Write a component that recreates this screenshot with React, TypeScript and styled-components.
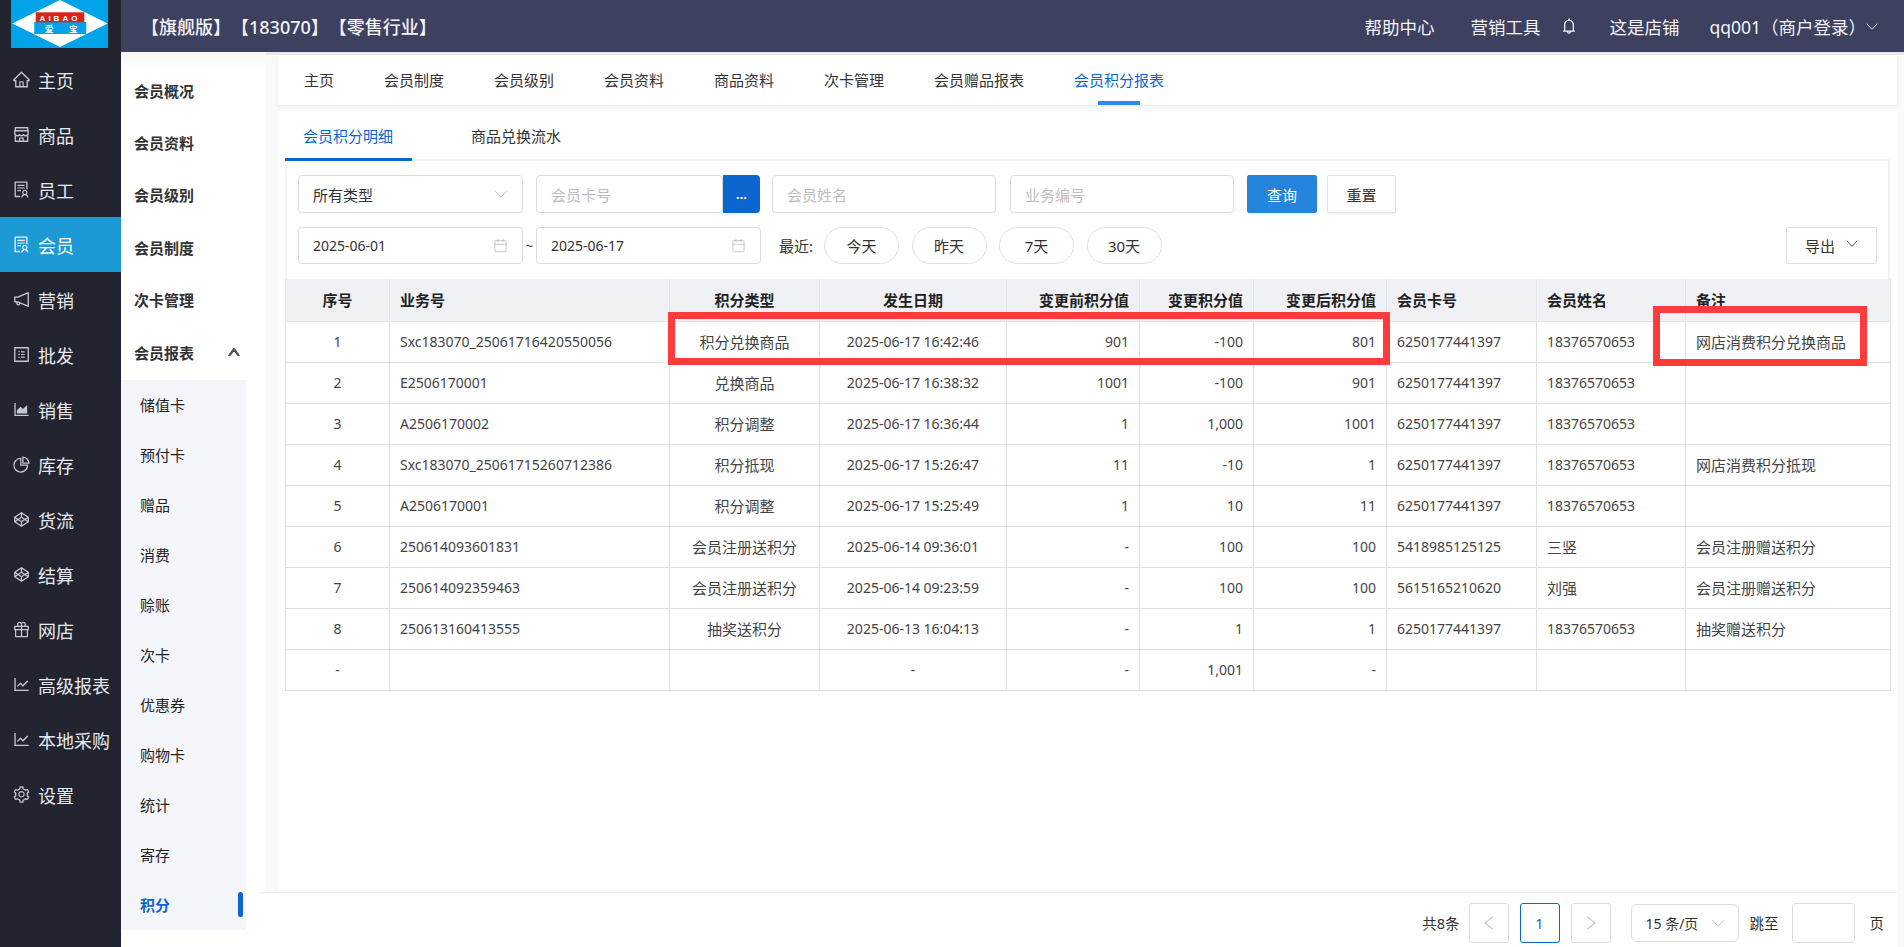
import { FC, ReactNode } from "react";
import styled, { createGlobalStyle, css } from "styled-components";
import {
  AiOutlineAreaChart,
  AiOutlineBell,
  AiOutlineCodepen,
  AiOutlineGift,
  AiOutlineHome,
  AiOutlineLineChart,
  AiOutlineNotification,
  AiOutlinePieChart,
  AiOutlineProfile,
  AiOutlineSetting,
  AiOutlineShop,
  AiOutlineSolution,
  AiOutlineUp,
} from "react-icons/ai";
import { Calendar } from "lucide-react";

const GlobalStyle = createGlobalStyle`
  html, body {
    margin: 0;
    height: 100%;
    overflow: hidden;
    background: #fff;
    font-family: "Noto Sans", "Noto Sans CJK SC", sans-serif;
    color: #333;
    text-spacing-trim: space-all;
  }
  * { box-sizing: border-box; }
`;

const Page = styled.div`
  display: flex;
  width: 1904px;
  height: 947px;
  overflow: hidden;
`;

/* left dark menu */
const Sidebar = styled.aside`
  flex: 0 0 121px;
  background: #22252f;
`;
const LogoBox = styled.div`
  height: 52px;
  padding-left: 11px;
`;
const NavItem = styled.div<{ $active?: boolean }>`
  display: flex;
  align-items: center;
  gap: 7px;
  height: 55px;
  padding-left: 12px;
  font-size: 18px;
  color: ${({ $active }) => ($active ? "#fff" : "#e6e8ef")};
  background: ${({ $active }) => ($active ? "#1d9ad6" : "transparent")};
  svg {
    flex: none;
    font-size: 19px;
    color: ${({ $active }) => ($active ? "#e6f3fb" : "#c3c6d0")};
  }
`;

const Right = styled.div`
  flex: 1;
  min-width: 0;
  display: flex;
  flex-direction: column;
`;

/* top bar */
const TopBar = styled.header`
  flex: 0 0 52px;
  display: flex;
  align-items: center;
  justify-content: space-between;
  padding: 0 26px 0 20px;
  background: #3d405e;
  color: #f2f3f7;
  font-size: 17.5px;
`;
const TopTitle = styled.div`
  font-size: 18px;
  font-weight: 500;
`;
const TopLinks = styled.div`
  display: flex;
  align-items: center;
  gap: 36px;
`;
const TopGroup = styled.div`
  display: flex;
  align-items: center;
  gap: 20px;
  margin-right: -5px;
  svg {
    font-size: 18px;
  }
`;
const UserBox = styled.div`
  display: flex;
  align-items: center;
  margin-left: -6px;
`;

const Body = styled.div`
  flex: 1;
  display: flex;
  min-height: 0;
`;

/* second menu */
const SubNav = styled.nav`
  flex: 0 0 144px;
  padding-top: 12px;
  background: linear-gradient(#f6f6f8, #fff 18px);
`;
const SubNavItem = styled.div`
  display: flex;
  align-items: center;
  justify-content: space-between;
  height: 52.4px;
  padding: 0 24px 0 13px;
  font-size: 15px;
  font-weight: 600;
  color: #333;
  svg {
    font-size: 14px;
    color: #555;
    stroke: #555;
    stroke-width: 90;
  }
`;
const SubSubList = styled.div`
  width: 125px;
  margin-top: 1.6px;
  background: #f5f6fb;
`;
const SubSubItem = styled.div<{ $active?: boolean }>`
  display: flex;
  align-items: center;
  justify-content: space-between;
  height: 50px;
  padding: 0 3px 0 19px;
  font-size: 15px;
  color: ${({ $active }) => ($active ? "#0d66d0" : "#222")};
  font-weight: ${({ $active }) => ($active ? 700 : 400)};
`;
const ActiveBar = styled.span`
  width: 5px;
  height: 25px;
  border-radius: 3px;
  background: #0d66d0;
`;

/* content */
const Content = styled.main`
  flex: 1;
  min-width: 0;
  display: flex;
  flex-direction: column;
  padding: 3px 7px 0 13px;
  background: #fafafa;
  box-shadow: inset 0 3px 0 #e9e9eb;
`;
const TopTabs = styled.div`
  flex: 0 0 50px;
  display: flex;
  align-items: center;
  gap: 50px;
  padding: 0 0 2px 26px;
  background: #fff;
  box-shadow: 0 1px 3px rgba(0, 0, 0, 0.08);
`;
const TopTab = styled.div<{ $active?: boolean }>`
  position: relative;
  font-size: 15px;
  color: ${({ $active }) => ($active ? "#0d66d0" : "#333")};
  ${({ $active }) =>
    $active &&
    css`
      &::after {
        content: "";
        position: absolute;
        left: 24px;
        bottom: -15px;
        width: 42px;
        height: 4px;
        background: #2b89f5;
      }
    `}
`;
const Card = styled.section`
  flex: 1;
  margin-top: 6px;
  padding: 0 7px;
  background: #fff;
  min-height: 0;
`;
const InnerTabs = styled.div`
  display: flex;
  height: 50px;
  gap: 41px;
  border-bottom: 2px solid #f0f0f0;
`;
const InnerTab = styled.div<{ $active?: boolean }>`
  display: flex;
  align-items: center;
  height: 50px;
  width: ${({ $active }) => ($active ? "127px" : "auto")};
  padding: 1px 18px 0;
  font-size: 15px;
  color: ${({ $active }) => ($active ? "#0d66d0" : "#333")};
  border-bottom: 3px solid ${({ $active }) => ($active ? "#0d66d0" : "transparent")};
`;
const FilterBox = styled.div`
  display: flex;
  flex-direction: column;
  gap: 14px;
  padding: 14px 11px 15px 11px;
  border-left: 2px solid #f2f2f2;
  border-right: 2px solid #f2f2f2;
`;
const FilterRow = styled.div`
  display: flex;
  align-items: center;
`;

const fieldStyle = css`
  display: flex;
  align-items: center;
  justify-content: space-between;
  padding: 0 14px;
  border: 1px solid #dcdcdc;
  border-radius: 4px;
  background: #fff;
  font-size: 15px;
`;
const Field = styled.div<{ $w: number; $h: number; $after?: number; $dim?: boolean; $date?: boolean }>`
  ${fieldStyle}
  flex: 0 0 ${({ $w }) => $w}px;
  height: ${({ $h }) => $h}px;
  margin-right: ${({ $after = 0 }) => $after}px;
  color: ${({ $dim }) => ($dim ? "#bdbdbd" : "#333")};
  font-size: ${({ $date }) => ($date ? "14px" : "15px")};
  svg {
    color: #bdbdbd;
  }
`;
const AttachButton = styled.div`
  flex: 0 0 37px;
  height: 38px;
  margin-right: 12px;
  display: flex;
  align-items: center;
  justify-content: center;
  background: #0d66d0;
  border-radius: 0 4px 4px 0;
  color: #fff;
  font-size: 13px;
  font-weight: 700;
  line-height: 1;
  box-shadow: 0 2px 2px rgba(0, 0, 0, 0.06);
`;
const Button = styled.div<{ $primary?: boolean; $w: number; $after?: number }>`
  flex: 0 0 ${({ $w }) => $w}px;
  height: 38px;
  margin-right: ${({ $after = 0 }) => $after}px;
  display: flex;
  align-items: center;
  justify-content: center;
  font-size: 15px;
  border-radius: 2px;
  color: ${({ $primary }) => ($primary ? "#fff" : "#333")};
  background: ${({ $primary }) => ($primary ? "#2585dd" : "#fff")};
  border: 1px solid ${({ $primary }) => ($primary ? "#2585dd" : "#e2e2e2")};
  box-shadow: 0 2px 2px rgba(0, 0, 0, 0.05);
`;
const Tilde = styled.span`
  flex: 0 0 13px;
  text-align: center;
  font-size: 13px;
`;
const RecentLabel = styled.span`
  margin: 0 11px 0 18px;
  font-size: 15px;
`;
const Pill = styled.div`
  flex: 0 0 75px;
  height: 37px;
  margin-right: 12.5px;
  display: flex;
  align-items: center;
  justify-content: center;
  border: 1px solid #e0e0e0;
  border-radius: 19px;
  font-size: 15px;
`;
const ExportButton = styled.div`
  margin-left: auto;
  flex: 0 0 91px;
  height: 37px;
  display: flex;
  align-items: center;
  justify-content: center;
  gap: 11px;
  border: 1px solid #e0e0e0;
  border-radius: 2px;
  font-size: 15px;
  svg {
    margin-top: -4px;
  }
`;

/* table */
const TableWrap = styled.div`
  position: relative;
`;
const Table = styled.table`
  width: 1605px;
  table-layout: fixed;
  border-collapse: collapse;
`;
type Align = "left" | "center" | "right";
const Th = styled.th<{ $align: Align }>`
  height: 42px;
  padding: 0 10px;
  background: #eff1f5;
  border: 1px solid #e4e5e9;
  border-top: 0;
  font-size: 15px;
  font-weight: 700;
  color: #222;
  text-align: ${({ $align }) => $align};
  white-space: nowrap;
`;
const Td = styled.td<{ $align: Align; $latin?: boolean }>`
  height: 41px;
  padding: 0 10px;
  border: 1px solid #dfdfe1;
  font-size: ${({ $latin }) => ($latin ? "14px" : "15px")};
  color: #444;
  text-align: ${({ $align }) => $align};
  white-space: nowrap;
`;
const RedBox = styled.div<{ $l: number; $t: number; $w: number; $h: number }>`
  position: absolute;
  left: ${({ $l }) => $l}px;
  top: ${({ $t }) => $t}px;
  width: ${({ $w }) => $w}px;
  height: ${({ $h }) => $h}px;
  border: 7px solid #ff3b3b;
  pointer-events: none;
`;

/* pagination */
const Pager = styled.footer`
  flex: 0 0 55px;
  display: flex;
  align-items: center;
  justify-content: flex-end;
  margin-left: -18px;
  padding: 5px 13px 0 0;
  background: #fff;
  border-top: 1px solid #eee;
  font-size: 14.5px;
`;
const PagerText = styled.span<{ $after: number }>`
  margin-right: ${({ $after }) => $after}px;
`;
const PageBox = styled.div<{ $active?: boolean; $after: number }>`
  flex: 0 0 40px;
  height: 40px;
  margin-right: ${({ $after }) => $after}px;
  display: flex;
  align-items: center;
  justify-content: center;
  border: 1px solid ${({ $active }) => ($active ? "#0d66d0" : "#dedede")};
  border-radius: 3px;
  color: ${({ $active }) => ($active ? "#0d66d0" : "#c8c8c8")};
`;
const SizeSelect = styled.div`
  flex: 0 0 108px;
  height: 38px;
  margin-right: 11px;
  display: flex;
  align-items: center;
  justify-content: space-between;
  padding: 0 13px 0 14px;
  border: 1px solid #dedede;
  border-radius: 6px;
  font-size: 14px;
  svg {
    color: #c4c4c4;
  }
`;
const JumpInput = styled.div`
  flex: 0 0 63px;
  height: 40px;
  margin: 0 15px 0 13px;
  border: 1px solid #dedede;
  border-radius: 3px;
`;

const Chevron: FC<{ w?: number; h?: number }> = ({ w = 14, h = 8 }) => (
  <svg width={w} height={h} viewBox="0 0 14 8" fill="none">
    <path d="M1 .8 7 7.2 13 .8" stroke="currentColor" strokeWidth="1" />
  </svg>
);

const PagerArrow: FC<{ flip?: boolean }> = ({ flip }) => (
  <svg width="10" height="14" viewBox="0 0 10 14" fill="none">
    <path d={flip ? "M1 .8 9 7 1 13.2" : "M9 .8 1 7 9 13.2"} stroke="currentColor" strokeWidth="1.2" />
  </svg>
);

const Logo = () => (
  <svg width="97" height="48" viewBox="0 0 97 48" style={{ display: "block" }}>
    <rect width="97" height="48" fill="#00a2e8" />
    <polygon points="1.3,23.5 49,0 96.7,23.5 49,47" fill="#fff" />
    <rect x="23.3" y="22" width="52" height="12" fill="#00a2e8" />
    <rect x="24.7" y="12.3" width="48.6" height="10" fill="#d4261c" />
    <text x="49" y="20.5" textAnchor="middle" fontSize="8" fontWeight="700" letterSpacing="3" fill="#fff" fontFamily="Liberation Sans, sans-serif">
      AIBAO
    </text>
    <text x="34" y="31.5" fontSize="8.5" fontWeight="700" fill="#fff" fontFamily="Noto Sans CJK SC, sans-serif">
      爱
    </text>
    <text x="58" y="31.5" fontSize="8.5" fontWeight="700" fill="#fff" fontFamily="Noto Sans CJK SC, sans-serif">
      宝
    </text>
  </svg>
);

const navItems: [ReactNode, string][] = [
  [<AiOutlineHome />, "主页"],
  [<AiOutlineShop />, "商品"],
  [<AiOutlineSolution />, "员工"],
  [<AiOutlineSolution />, "会员"],
  [<AiOutlineNotification />, "营销"],
  [<AiOutlineProfile />, "批发"],
  [<AiOutlineAreaChart />, "销售"],
  [<AiOutlinePieChart />, "库存"],
  [<AiOutlineCodepen />, "货流"],
  [<AiOutlineCodepen />, "结算"],
  [<AiOutlineGift />, "网店"],
  [<AiOutlineLineChart />, "高级报表"],
  [<AiOutlineLineChart />, "本地采购"],
  [<AiOutlineSetting />, "设置"],
];

const subNav = ["会员概况", "会员资料", "会员级别", "会员制度", "次卡管理"];
const reportNav = ["储值卡", "预付卡", "赠品", "消费", "赊账", "次卡", "优惠券", "购物卡", "统计", "寄存", "积分"];
const topTabs = ["主页", "会员制度", "会员级别", "会员资料", "商品资料", "次卡管理", "会员赠品报表", "会员积分报表"];

const columns: { title: string; width: number; head: Align; cell: Align }[] = [
  { title: "序号", width: 104, head: "center", cell: "center" },
  { title: "业务号", width: 280, head: "left", cell: "left" },
  { title: "积分类型", width: 150, head: "center", cell: "center" },
  { title: "发生日期", width: 187, head: "center", cell: "center" },
  { title: "变更前积分值", width: 133, head: "right", cell: "right" },
  { title: "变更积分值", width: 114, head: "right", cell: "right" },
  { title: "变更后积分值", width: 133, head: "right", cell: "right" },
  { title: "会员卡号", width: 150, head: "left", cell: "left" },
  { title: "会员姓名", width: 149, head: "left", cell: "left" },
  { title: "备注", width: 205, head: "left", cell: "left" },
];

const rows: string[][] = [
  ["1", "Sxc183070_25061716420550056", "积分兑换商品", "2025-06-17 16:42:46", "901", "-100", "801", "6250177441397", "18376570653", "网店消费积分兑换商品"],
  ["2", "E2506170001", "兑换商品", "2025-06-17 16:38:32", "1001", "-100", "901", "6250177441397", "18376570653", ""],
  ["3", "A2506170002", "积分调整", "2025-06-17 16:36:44", "1", "1,000", "1001", "6250177441397", "18376570653", ""],
  ["4", "Sxc183070_25061715260712386", "积分抵现", "2025-06-17 15:26:47", "11", "-10", "1", "6250177441397", "18376570653", "网店消费积分抵现"],
  ["5", "A2506170001", "积分调整", "2025-06-17 15:25:49", "1", "10", "11", "6250177441397", "18376570653", ""],
  ["6", "250614093601831", "会员注册送积分", "2025-06-14 09:36:01", "-", "100", "100", "5418985125125", "三竖", "会员注册赠送积分"],
  ["7", "250614092359463", "会员注册送积分", "2025-06-14 09:23:59", "-", "100", "100", "5615165210620", "刘强", "会员注册赠送积分"],
  ["8", "250613160413555", "抽奖送积分", "2025-06-13 16:04:13", "-", "1", "1", "6250177441397", "18376570653", "抽奖赠送积分"],
  ["-", "", "", "-", "-", "1,001", "-", "", "", ""],
];

const hasCjk = (text: string) => /[\u4e00-\u9fff]/.test(text);

const App = () => {
  return (
    <Page>
      <GlobalStyle />
      <Sidebar>
        <LogoBox>
          <Logo />
        </LogoBox>
        {navItems.map(([icon, label]) => (
          <NavItem key={label} $active={label === "会员"}>
            {icon}
            {label}
          </NavItem>
        ))}
      </Sidebar>
      <Right>
        <TopBar>
          <TopTitle>【旗舰版】【183070】【零售行业】</TopTitle>
          <TopLinks>
            <span>帮助中心</span>
            <TopGroup>
              <span>营销工具</span>
              <AiOutlineBell />
            </TopGroup>
            <span>这是店铺</span>
            <UserBox>
              <span>qq001（商户登录）</span>
              <Chevron w={12} h={7} />
            </UserBox>
          </TopLinks>
        </TopBar>
        <Body>
          <SubNav>
            {subNav.map((item) => (
              <SubNavItem key={item}>{item}</SubNavItem>
            ))}
            <SubNavItem>
              会员报表
              <AiOutlineUp />
            </SubNavItem>
            <SubSubList>
              {reportNav.map((item) => (
                <SubSubItem key={item} $active={item === "积分"}>
                  {item}
                  {item === "积分" && <ActiveBar />}
                </SubSubItem>
              ))}
            </SubSubList>
          </SubNav>
          <Content>
            <TopTabs>
              {topTabs.map((tab) => (
                <TopTab key={tab} $active={tab === "会员积分报表"}>
                  {tab}
                </TopTab>
              ))}
            </TopTabs>
            <Card>
              <InnerTabs>
                <InnerTab $active>会员积分明细</InnerTab>
                <InnerTab>商品兑换流水</InnerTab>
              </InnerTabs>
              <FilterBox>
                <FilterRow>
                  <Field $w={225} $h={38} $after={13}>
                    所有类型
                    <Chevron />
                  </Field>
                  <Field $w={187} $h={38} $dim>
                    会员卡号
                  </Field>
                  <AttachButton>...</AttachButton>
                  <Field $w={224} $h={38} $after={14} $dim>
                    会员姓名
                  </Field>
                  <Field $w={224} $h={38} $after={13} $dim>
                    业务编号
                  </Field>
                  <Button $primary $w={70} $after={10}>
                    查询
                  </Button>
                  <Button $w={69}>重置</Button>
                </FilterRow>
                <FilterRow>
                  <Field $w={225} $h={37} $date>
                    2025-06-01
                    <Calendar size={15} strokeWidth={1.3} />
                  </Field>
                  <Tilde>~</Tilde>
                  <Field $w={225} $h={37} $date>
                    2025-06-17
                    <Calendar size={15} strokeWidth={1.3} />
                  </Field>
                  <RecentLabel>最近:</RecentLabel>
                  <Pill>今天</Pill>
                  <Pill>昨天</Pill>
                  <Pill>7天</Pill>
                  <Pill>30天</Pill>
                  <ExportButton>
                    导出
                    <Chevron w={12} h={7} />
                  </ExportButton>
                </FilterRow>
              </FilterBox>
              <TableWrap>
                <Table>
                  <colgroup>
                    {columns.map((col) => (
                      <col key={col.title} width={col.width} />
                    ))}
                  </colgroup>
                  <thead>
                    <tr>
                      {columns.map((col) => (
                        <Th key={col.title} $align={col.head}>
                          {col.title}
                        </Th>
                      ))}
                    </tr>
                  </thead>
                  <tbody>
                    {rows.map((row, i) => (
                      <tr key={i}>
                        {row.map((value, j) => (
                          <Td key={j} $align={columns[j].cell} $latin={!hasCjk(value)}>
                            {value}
                          </Td>
                        ))}
                      </tr>
                    ))}
                  </tbody>
                </Table>
                <RedBox $l={383} $t={33} $w={722} $h={53} />
                <RedBox $l={1368} $t={27} $w={214} $h={60} />
              </TableWrap>
            </Card>
            <Pager>
              <PagerText $after={9}>共8条</PagerText>
              <PageBox $after={11}>
                <PagerArrow />
              </PageBox>
              <PageBox $active $after={11}>
                1
              </PageBox>
              <PageBox $after={20}>
                <PagerArrow flip />
              </PageBox>
              <SizeSelect>
                15 条/页
                <Chevron />
              </SizeSelect>
              <span>跳至</span>
              <JumpInput />
              <span>页</span>
            </Pager>
          </Content>
        </Body>
      </Right>
    </Page>
  );
};

export default App;
